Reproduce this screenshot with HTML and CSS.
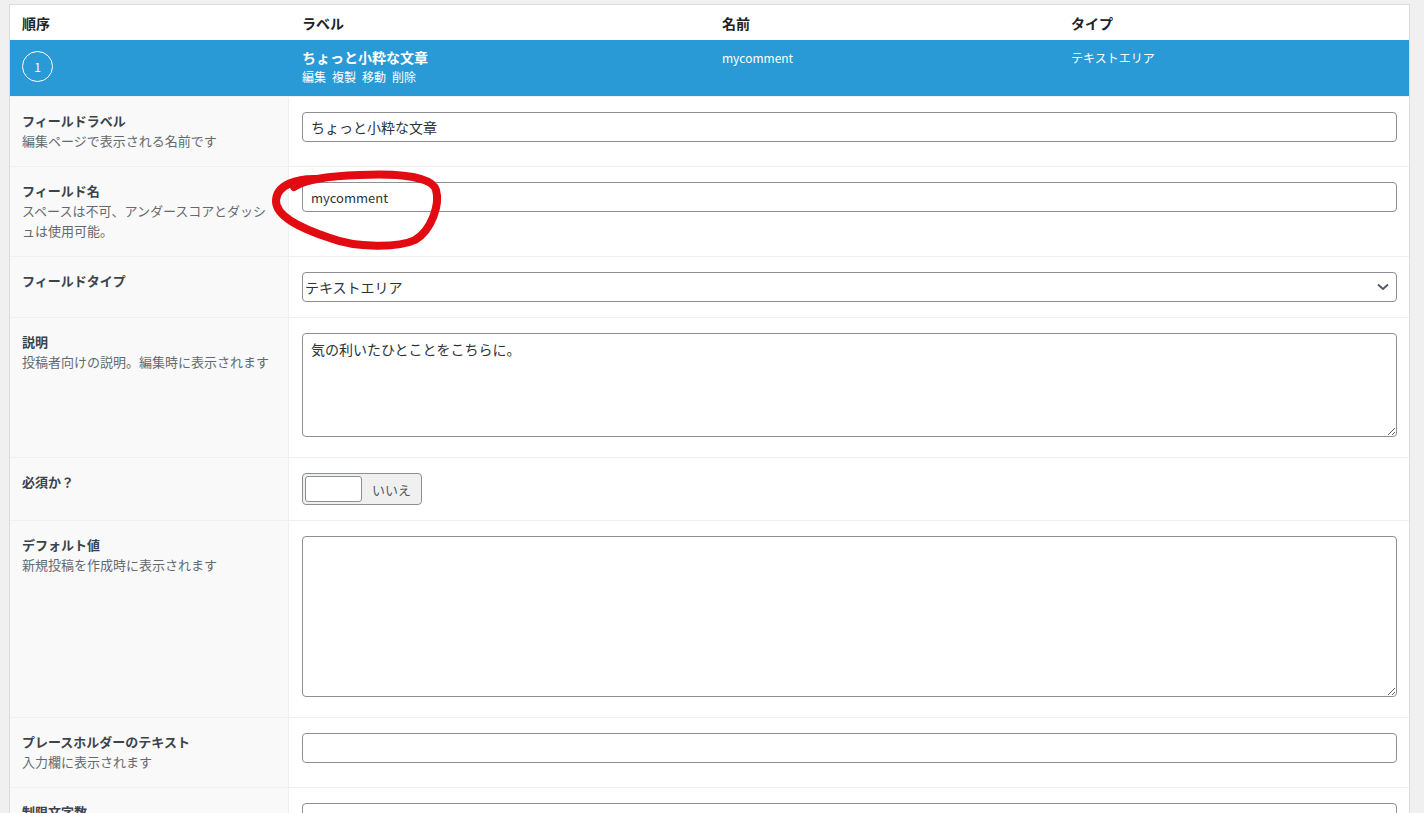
FILE: index.html
```html
<!DOCTYPE html>
<html lang="ja">
<head>
<meta charset="utf-8">
<title>フィールド編集</title>
<link rel="stylesheet" href="styles.css">
</head>
<body>
<div class="page">
  <div class="table">
    <div class="head">
      <div class="hcell">順序</div>
      <div class="hcell">ラベル</div>
      <div class="hcell">名前</div>
      <div class="hcell">タイプ</div>
    </div>
    <div class="field-row">
      <div class="fcell"><span class="order">1</span></div>
      <div class="fcell">
        <div class="f-title">ちょっと小粋な文章</div>
        <div class="f-actions"><span>編集</span><span>複製</span><span>移動</span><span>削除</span></div>
      </div>
      <div class="fcell f-small">mycomment</div>
      <div class="fcell f-small">テキストエリア</div>
    </div>

    <div class="row">
      <div class="lab"><div class="lt">フィールドラベル</div><div class="ld">編集ページで表示される名前です</div></div>
      <div class="val"><input class="inp" type="text" value="ちょっと小粋な文章"></div>
    </div>
    <div class="row">
      <div class="lab"><div class="lt">フィールド名</div><div class="ld">スペースは不可、アンダースコアとダッシュは使用可能。</div></div>
      <div class="val mark-wrap"><input class="inp inp-sm" type="text" value="mycomment">
        <svg class="mark" width="200" height="100" viewBox="260 165 200 100">
          <path d="M318 178 C297 177 277 184 276 199 C275 215 300 227 330 237 C356 247 398 247 415 239 C432 229 440 203 436 189 C432 176 400 172 360 174 C330 175 304 179 294 186" fill="none" stroke="#e30b12" stroke-width="8" stroke-linecap="round" stroke-linejoin="round"/>
        </svg>
      </div>
    </div>
    <div class="row">
      <div class="lab"><div class="lt">フィールドタイプ</div></div>
      <div class="val"><div class="sel-wrap"><select class="sel"><option>テキストエリア</option></select>
        <svg class="chev" width="12" height="8" viewBox="0 0 12 8"><path d="M1 1.5 L6 6 L11 1.5" fill="none" stroke="#50575e" stroke-width="1.8"/></svg></div></div>
    </div>
    <div class="row">
      <div class="lab"><div class="lt">説明</div><div class="ld">投稿者向けの説明。編集時に表示されます</div></div>
      <div class="val"><textarea class="ta ta-desc">気の利いたひとことをこちらに。</textarea></div>
    </div>
    <div class="row">
      <div class="lab"><div class="lt">必須か？</div></div>
      <div class="val"><div class="toggle"><span class="knob"></span><span class="tg-text">いいえ</span></div></div>
    </div>
    <div class="row">
      <div class="lab"><div class="lt">デフォルト値</div><div class="ld">新規投稿を作成時に表示されます</div></div>
      <div class="val"><textarea class="ta ta-def"></textarea></div>
    </div>
    <div class="row">
      <div class="lab"><div class="lt">プレースホルダーのテキスト</div><div class="ld">入力欄に表示されます</div></div>
      <div class="val"><input class="inp" type="text" value=""></div>
    </div>
    <div class="row">
      <div class="lab"><div class="lt">制限文字数</div><div class="ld">&nbsp;</div></div>
      <div class="val"><input class="inp" type="number" value=""></div>
    </div>
  </div>
</div>
</body>
</html>
```
FILE: styles.css
```css
html, body {
  margin: 0;
  padding: 0;
  height: 100%;
  overflow: hidden;
}
body {
  background: #f0f0f1;
  font-family: "Noto Sans CJK JP", "Noto Sans", sans-serif;
  color: #1d2327;
  font-size: 13px;
}
.page {
  padding: 4px 14px 0 9px;
}
.table {
  background: #fff;
  border: 1px solid #dcdcde;
  border-bottom: none;
}
.head, .field-row {
  display: grid;
  grid-template-columns: 279px 420px 349px 1fr;
}
.head {
  height: 35px;
  align-items: center;
  background: #fff;
}
.hcell {
  padding-left: 12px;
  font-size: 14px;
  font-weight: 600;
  color: #1d2327;
}
.head .hcell:nth-child(n+2) { padding-left: 13px; }
.field-row {
  background: #2a9ad6;
  color: #fff;
  height: 56px;
}
.fcell {
  padding: 7px 0 0 13px;
}
.fcell:first-child {
  padding: 11px 0 0 12px;
}
.order {
  display: flex;
  align-items: center;
  justify-content: center;
  width: 29px;
  height: 29px;
  border: 1.5px solid #fff;
  border-radius: 50%;
  font-size: 12px;
  line-height: 1;
}
.f-title {
  font-size: 14px;
  font-weight: 700;
  line-height: 20px;
}
.f-actions {
  font-size: 12px;
  line-height: 20px;
  display: flex;
  gap: 6px;
}
.f-small {
  font-size: 12px;
  line-height: 20px;
  padding-top: 8px;
}
.row {
  display: grid;
  grid-template-columns: 279px 1fr;
  border-top: 1px solid #f0f0f1;
}
.lab {
  background: #f9f9f9;
  border-right: 1px solid #f0f0f1;
  padding: 14px 13px 15px 12px;
}
.lt {
  font-weight: 700;
  font-size: 13px;
  line-height: 20px;
  color: #3c434a;
}
.ld {
  font-size: 13px;
  line-height: 20px;
  color: #646970;
}
.val {
  padding: 15px 12px 15px 13px;
}
.inp {
  display: block;
  box-sizing: border-box;
  width: 100%;
  height: 30px;
  border: 1px solid #8c8f94;
  border-radius: 4px;
  padding: 0 8px;
  font-family: inherit;
  font-size: 14px;
  color: #2c3338;
  background: #fff;
  margin: 0;
}
.inp-sm { font-size: 13px; }
.mark-wrap { position: relative; }
.mark {
  position: absolute;
  left: -29px;
  top: -1px;
  pointer-events: none;
}
.sel-wrap {
  position: relative;
}
.sel {
  display: block;
  box-sizing: border-box;
  width: 100%;
  height: 30px;
  border: 1px solid #8c8f94;
  border-radius: 4px;
  padding: 0 24px 0 2px;
  font-family: inherit;
  font-size: 14px;
  color: #2c3338;
  background: #fff;
  -webkit-appearance: none;
  appearance: none;
}
.chev {
  position: absolute;
  right: 8px;
  top: 11px;
  pointer-events: none;
}
.ta {
  display: block;
  box-sizing: border-box;
  width: 100%;
  border: 1px solid #8c8f94;
  border-radius: 4px;
  padding: 4px 8px;
  font-family: inherit;
  font-size: 14px;
  line-height: 22px;
  color: #2c3338;
  background: #fff;
  margin: 0 0 5px;
}
.ta-desc { height: 104px; }
.ta-def { height: 161px; }
.toggle {
  display: flex;
  align-items: center;
  box-sizing: border-box;
  width: 120px;
  height: 32px;
  border: 1px solid #8c8f94;
  border-radius: 4px;
  background: #f0f0f1;
  padding: 2px;
}
.knob {
  display: block;
  box-sizing: border-box;
  width: 57px;
  height: 26px;
  background: #fff;
  border: 1px solid #8c8f94;
  border-radius: 3px;
}
.tg-text {
  margin-left: 10px;
  font-size: 13px;
  color: #50575e;
}
```
